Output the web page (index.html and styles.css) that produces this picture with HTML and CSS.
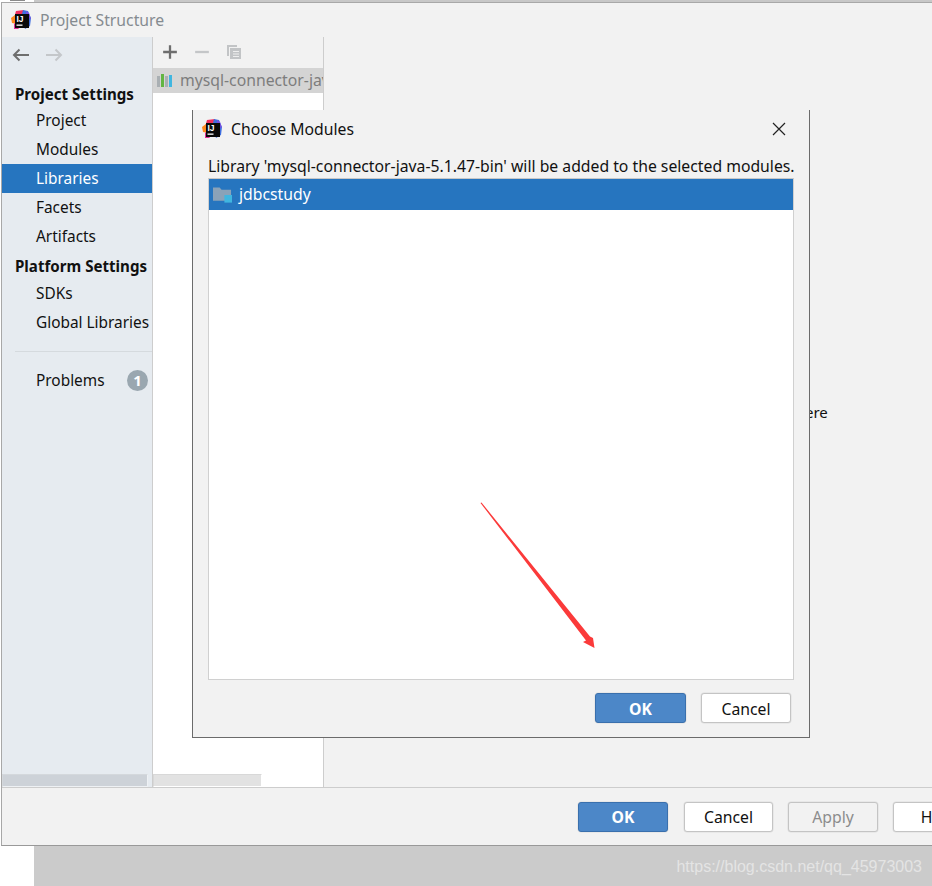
FILE: index.html
```html
<!DOCTYPE html>
<html lang="en">
<head>
<meta charset="utf-8">
<title>Project Structure</title>
<link rel="stylesheet" href="styles.css">
</head>
<body>
<div class="page">
  <div class="top-strip"></div>
  <div class="window">
    <header class="titlebar">
      <svg class="logo" viewBox="0 0 20 20"><path d="M3 8 L5 1 L13 0 L14 6 L5 14 Z" fill="#f2305f"/><path d="M0 8 L4 5 L6 14 L1 13 Z" fill="#ff8a1f"/><path d="M12 0 L17 1 L20 8 L19 16 L14 19 L10 8 Z" fill="#3f6fe0"/><path d="M15 1 L18 3 L20 9 L15 7 Z" fill="#7a4fe0"/><path d="M3 13 L8 19 L3 19 Z" fill="#e0309a"/><rect x="4" y="4" width="14" height="14" fill="#0a0a0a"/><text x="5.500" y="11.500" class="logo-text">IJ</text><rect x="5.500" y="14.500" width="6" height="1.300" fill="#fff"/></svg>
      <span class="title">Project Structure</span>
    </header>
    <div class="main">
      <aside class="sidebar">
        <div class="nav-arrows">
          <svg class="arrow-icon" viewBox="0 0 18 14"><path d="M17 7H2M7.500 1.500 2 7l5.500 5.500" fill="none" stroke="#6e6e6e" stroke-width="2"/></svg>
          <svg class="arrow-icon" viewBox="0 0 18 14"><path d="M1 7h15M10.500 1.500 16 7l-5.500 5.500" fill="none" stroke="#c4c7ca" stroke-width="2"/></svg>
        </div>
        <div class="nav-head">Project Settings</div>
        <div class="nav-item">Project</div>
        <div class="nav-item">Modules</div>
        <div class="nav-item selected">Libraries</div>
        <div class="nav-item">Facets</div>
        <div class="nav-item">Artifacts</div>
        <div class="nav-head second">Platform Settings</div>
        <div class="nav-item">SDKs</div>
        <div class="nav-item">Global Libraries</div>
        <div class="nav-sep"></div>
        <div class="nav-item problems">Problems <span class="badge">1</span></div>
        <div class="hscroll side-scroll"></div>
      </aside>
      <section class="libs">
        <div class="toolbar">
          <svg class="tool" viewBox="0 0 14 14"><path d="M7 1v12M1 7h12" stroke="#6e6e6e" stroke-width="2"/></svg>
          <svg class="tool" viewBox="0 0 14 14"><path d="M1 7h12" stroke="#c4c6c8" stroke-width="2"/></svg>
          <svg class="tool" viewBox="0 0 16 16"><path d="M1 12V1h10v2H3v9z" fill="#c2c4c6"/><rect x="4" y="4" width="11" height="11" fill="#c2c4c6"/><path d="M7 7.500h6M7 10h6M7 12.500h6" stroke="#eee" stroke-width="1"/></svg>
        </div>
        <div class="lib-row">
          <svg class="lib-icon" viewBox="0 0 16 16"><rect x="0" y="3" width="3" height="11" fill="#a9afb3"/><rect x="4" y="1" width="3" height="13" fill="#62b543"/><rect x="8" y="3" width="3" height="11" fill="#a9afb3"/><rect x="12" y="2" width="3" height="12" fill="#40b6e0"/></svg>
          <span class="lib-name">mysql-connector-java-5.1.47-bin</span>
        </div>
        <div class="hscroll lib-scroll"></div>
      </section>
      <section class="detail"><span class="detail-text">ere</span></section>
    </div>
    <footer class="footer">
      <button class="btn primary">OK</button>
      <button class="btn btn-cancel">Cancel</button>
      <button class="btn disabled">Apply</button>
      <button class="btn">Help</button>
    </footer>
  </div>
  <div class="band"><span class="watermark">https://blog.csdn.net/qq_45973003</span></div>

  <div class="dialog">
    <div class="dialog-title">
      <svg class="logo" viewBox="0 0 20 20"><path d="M3 8 L5 1 L13 0 L14 6 L5 14 Z" fill="#f2305f"/><path d="M0 8 L4 5 L6 14 L1 13 Z" fill="#ff8a1f"/><path d="M12 0 L17 1 L20 8 L19 16 L14 19 L10 8 Z" fill="#3f6fe0"/><path d="M15 1 L18 3 L20 9 L15 7 Z" fill="#7a4fe0"/><path d="M3 13 L8 19 L3 19 Z" fill="#e0309a"/><rect x="4" y="4" width="14" height="14" fill="#0a0a0a"/><text x="5.500" y="11.500" class="logo-text">IJ</text><rect x="5.500" y="14.500" width="6" height="1.300" fill="#fff"/></svg>
      <span class="dialog-name">Choose Modules</span>
      <svg class="close" viewBox="0 0 14 14"><path d="M1 1l12 12M13 1 1 13" stroke="#222" stroke-width="1.200" fill="none"/></svg>
    </div>
    <div class="dialog-label">Library 'mysql-connector-java-5.1.47-bin' will be added to the selected modules.</div>
    <div class="module-list">
      <div class="module-row">
        <svg class="folder" viewBox="0 0 20 18"><path d="M0 1h7l2 2.500h10V15H0z" fill="#8aa2b8"/><rect x="12" y="9" width="8" height="8" fill="#40b6e0"/></svg>
        <span>jdbcstudy</span>
      </div>
    </div>
    <div class="dialog-actions">
      <button class="btn primary dialog-ok">OK</button>
      <button class="btn">Cancel</button>
    </div>
  </div>

  <svg class="annotation" viewBox="0 0 932 886"><polygon points="480.500,503 481.500,502.500 590,636.500 593,638 594.500,648 583,642 586,640.500" fill="#fb3a3a"/></svg>
</div>
</body>
</html>
```
FILE: styles.css
```css
* { box-sizing: border-box; }
html, body { margin: 0; padding: 0; background: #fff; }
body { font-family: "Noto Sans", "Open Sans", sans-serif; font-size: 15.75px; color: #111; }
.page { position: relative; width: 932px; height: 886px; overflow: hidden; }

.top-strip { height: 2px; margin-left: 34px; background: #c8c8c8; }
.top-strip::before { content: ""; position: absolute; left: 10px; top: 0; width: 15px; height: 1px; background: #8a8a8a; }
.window { height: 844px; margin-left: 1px; border: 1px solid #a8a8a8; border-right: 0; border-bottom: 1px solid #999; background: #f2f2f2; display: flex; flex-direction: column; overflow: hidden; }

.titlebar { height: 34px; display: flex; align-items: center; padding-left: 9px; gap: 9px; flex: none; }
.logo { width: 20px; height: 20px; flex: none; }
.logo-text { font-family: "Liberation Sans", sans-serif; font-size: 8.500px; font-weight: 700; fill: #fff; }
.title { color: #858b90; }

.main { flex: 1; display: flex; min-height: 0; }
.sidebar { width: 151px; flex: none; background: #e6ebf0; border-right: 1px solid #cdcdcd; display: flex; flex-direction: column; font-size: 15.400px; }
.nav-arrows { height: 37px; display: flex; align-items: center; gap: 15px; padding: 0 0 2px 10px; flex: none; }
.arrow-icon { width: 18px; height: 14px; }
.nav-head { font-weight: 700; font-size: 15.100px; height: 26px; line-height: 28px; padding-left: 13px; color: #111; flex: none; margin-top: 6px; white-space: nowrap; }
.nav-head.second { margin-top: 0; height: 28px; line-height: 30px; }
.nav-item { height: 29px; line-height: 30px; padding-left: 34px; flex: none; white-space: nowrap; color: #111; }
.nav-item.selected { background: #2675bf; color: #fff; }
.nav-sep { height: 1px; background: #d5dade; margin: 14px 0 14px 13px; flex: none; }
.problems { display: flex; align-items: center; justify-content: space-between; padding-right: 4px; }
.badge { width: 21px; height: 21px; border-radius: 50%; background: #9aa7b0; color: #fff; font-weight: 700; font-size: 15px; line-height: 21px; text-align: center; }
.hscroll { height: 13px; flex: none; }
.side-scroll { margin-top: auto; width: 146px; background: #cdd2d8; border: 1px solid #d4d8dc; border-bottom-color: #eef1f4; border-right-color: #eef1f4; }

.libs { width: 171px; flex: none; background: #fff; border-right: 1px solid #cdcdcd; display: flex; flex-direction: column; overflow: hidden; }
.toolbar { height: 31px; background: #f2f2f2; display: flex; align-items: center; gap: 16px; padding: 0 0 2px 9px; flex: none; }
.tool { width: 16px; height: 16px; }
.lib-row { height: 25px; background: #d4d4d4; display: flex; align-items: center; gap: 7px; padding: 0 0 2px 4px; flex: none; white-space: nowrap; }
.lib-icon { width: 16px; height: 16px; flex: none; margin-top: 2px; }
.lib-name { color: #7d7d7d; }
.lib-scroll { margin-top: auto; width: 109px; background: #e2e2e2; border: 1px solid #d8d8d8; border-bottom-color: #fff; border-right-color: #fff; }

.detail { flex: 1; position: relative; }
.detail-text { position: absolute; left: 481px; top: 365px; font-size: 15px; }

.footer { height: 58px; flex: none; border-top: 1px solid #cdcdcd; display: flex; align-items: center; gap: 15px; padding-left: 576px; }
.btn { width: 90px; height: 30px; flex: none; border: 1px solid #c4c4c4; border-radius: 3px; background: #fff; font: inherit; color: #111; padding: 1px 0 0; box-shadow: 0 0 0 0.5px #ddd; }
.btn.primary { background: #4c87c8; border-color: #3a70ad; color: #fff; font-weight: 700; }
.btn.disabled { background: #f2f2f2; color: #8c8c8c; }
.btn-cancel { width: 89px; margin-left: 1px; }
.btn.dialog-ok { width: 91px; }

.band { height: 40px; margin-left: 34px; background: #cbcbcb; display: flex; align-items: center; justify-content: flex-end; padding: 2px 10px 0 0; }
.watermark { font-family: "Liberation Sans", sans-serif; font-size: 16px; color: #e4e4e4; }

.dialog { position: absolute; left: 192px; top: 110px; width: 618px; height: 628px; background: #f2f2f2; border: 1px solid #6b6b6b; border-top: 0; display: flex; flex-direction: column; }
.dialog-title { height: 38px; flex: none; display: flex; align-items: center; padding: 0 23px 0 9px; gap: 9px; }
.dialog-name { flex: 1; color: #111; }
.close { width: 14px; height: 14px; }
.dialog-label { padding-left: 15px; height: 30px; line-height: 36px; flex: none; white-space: nowrap; color: #111; }
.module-list { margin-left: 15px; width: 586px; height: 502px; flex: none; background: #fff; border: 1px solid #d0d0d0; border-top-color: #c8c8c8; }
.module-row { height: 31px; background: #2675bf; color: #fff; display: flex; align-items: center; gap: 7px; padding: 0 0 2px 4px; }
.folder { width: 19px; height: 18px; flex: none; margin-top: 3px; }
.dialog-actions { display: flex; gap: 15px; padding-left: 402px; margin-top: 13px; }

.annotation { position: absolute; left: 0; top: 0; width: 932px; height: 886px; pointer-events: none; }
```
